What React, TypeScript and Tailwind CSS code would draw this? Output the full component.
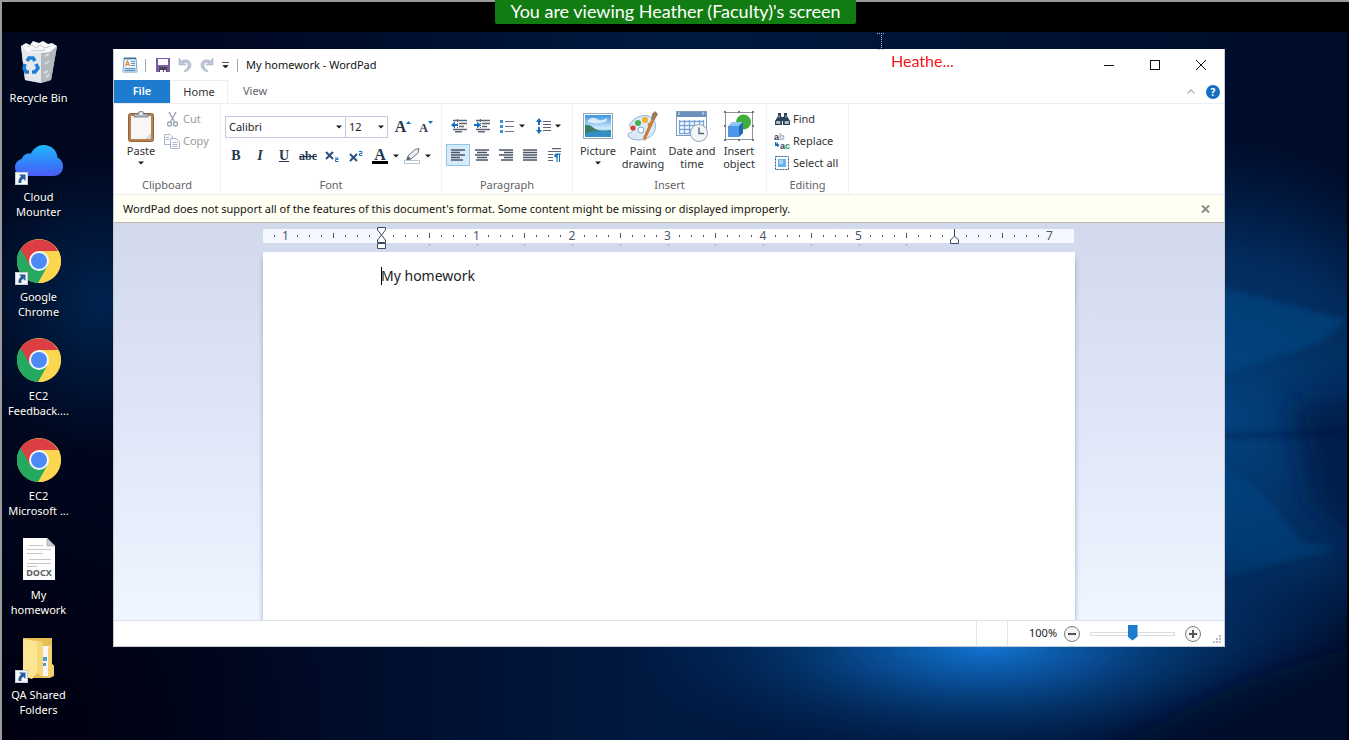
import { useState } from 'react'
import type { ReactNode } from 'react'
import clsx from 'clsx'

interface DesktopItem {
  name: string[]
  icon: ReactNode
  shortcut?: boolean
}

interface RibbonGroupProps {
  label: string
  className?: string
  children: ReactNode
}

interface IconButtonProps {
  label: string
  className?: string
  pressed?: boolean
  children: ReactNode
}

/* ---------- desktop icons ---------- */

function RecycleBinIcon() {
  return (
    <svg width="40" height="44" viewBox="0 0 40 44" aria-hidden="true">
      <path d="M2 6 L38 6 L32 40 L22 43 L6 40 Z" fill="#cfd4da" />
      <path d="M2 6 L22 11 L22 43 L6 40 Z" fill="#e4e8ec" />
      <path d="M22 11 L38 6 L32 40 L22 43 Z" fill="#b4b9c0" />
      <path d="M2 6 L7 3 L11 5 L14 1 L20 3 L24 1 L29 4 L33 3 L38 6 L31 12 L22 13 L9 12 Z" fill="#f7f8f9" />
      <path d="M8 7l5-2 4 3 4-3 5 3 5-2M12 10l6 1 8-1" fill="none" stroke="#c2c6cb" />
      <path d="M26 16l4-2M26 24l4-3M25 33l4-2M27 38l3-4" stroke="#d5d9dd" strokeWidth="2" />
      <g fill="none" stroke="#1b7fd4" strokeWidth="3.500">
        <path d="M8 21l2-3 4 0 2 3" />
        <path d="M6 24l-1 4 2 4h3" />
        <path d="M13 32h3l3-4-2-4" />
      </g>
    </svg>
  )
}

function CloudIcon() {
  return (
    <svg width="48" height="32" viewBox="0 0 48 32" aria-hidden="true">
      <defs>
        <linearGradient id="cloud" x1="0" y1="0" x2="0" y2="1">
          <stop offset="0" stopColor="#20b8fc" />
          <stop offset="0.500" stopColor="#3088fb" />
          <stop offset="1" stopColor="#4b5cf6" />
        </linearGradient>
      </defs>
      <path
        d="M10 31C4 31 0 27.500 0 22.500C0 18 3 14.500 7 14C7.500 10 11.500 8 16 8.500C19 3 23 0 28.500 0C36 0 42 5 42.500 12.500C46 14 48 17.500 48 21.500C48 27 44 31 38.500 31Z"
        fill="url(#cloud)"
      />
    </svg>
  )
}

function ChromeIcon() {
  return (
    <svg width="44" height="44" viewBox="0 0 44 44" aria-hidden="true">
      <circle cx="22" cy="22" r="22" fill="#fdd64f" />
      <path d="M22 22L13.300 27L2.900 11A22 22 0 0 1 41 12H22Z" fill="#db3f44" />
      <path d="M22 22L30.700 27L21 44A22 22 0 0 1 3.500 10L13.300 27Z" fill="#25a960" />
      <path d="M22 12H41.500A22 22 0 0 1 21.500 44L30.700 27Z" fill="#fdd64f" />
      <circle cx="22" cy="22" r="10" fill="#f4f8fc" />
      <circle cx="22" cy="22" r="8" fill="#4c8bf5" />
    </svg>
  )
}

function DocxIcon() {
  return (
    <svg width="32" height="42" viewBox="0 0 32 42" className="[text-shadow:none]" aria-hidden="true">
      <path d="M0 0H24L32 8V42H0Z" fill="#fdfdfd" />
      <path d="M24 0V8H32Z" fill="#c9ccd0" stroke="#8b9096" strokeWidth="0.500" />
      <path d="M6 7.500H20M4 11.500H28M4 15.500H19M6 21.500H28M4 25.500H28M4 28.500H14" stroke="#c5c7ca" />
      <text x="16" y="38" textAnchor="middle" fontSize="9" fontWeight="700" fontFamily="Noto Sans, sans-serif" fill="#5b5d60">
        DOCX
      </text>
    </svg>
  )
}

function FolderIcon() {
  return (
    <svg width="32" height="42" viewBox="0 0 32 42" aria-hidden="true">
      <path d="M0 0H29V26L31 28V38L27 40H8Z" fill="#e7bf55" />
      <path d="M19 8H26V38H19Z" fill="#f5f7fa" />
      <path d="M20 19h4v4h-4zM20 25h3v3h-3z" fill="#4aa0d0" />
      <path d="M25 10l4-4v20l2 2v9l-6 2z" fill="#f4d270" />
      <path d="M0 1L20 4V38L14 35L9 41L0 38Z" fill="#fce694" />
      <path d="M14 3L20 4V38L14 35Z" fill="#f6d879" />
    </svg>
  )
}

function ShortcutArrow() {
  return (
    <svg className="absolute bottom-0 left-0" width="13" height="13" viewBox="0 0 13 13" aria-hidden="true">
      <rect x="0.500" y="0.500" width="12" height="12" fill="#f6f8fa" stroke="#c4ccd4" />
      <path d="M4 2.500H10.500V9L8.300 6.800C6.500 8 6 9 6.500 11H3.500C3 8.500 4 6.500 6 4.500Z" fill="#2b5d9c" />
    </svg>
  )
}

const desktopItems: DesktopItem[] = [
  { name: ['Recycle Bin'], icon: <RecycleBinIcon /> },
  { name: ['Cloud', 'Mounter'], icon: <CloudIcon />, shortcut: true },
  { name: ['Google', 'Chrome'], icon: <ChromeIcon />, shortcut: true },
  { name: ['EC2', 'Feedback....'], icon: <ChromeIcon /> },
  { name: ['EC2', 'Microsoft ...'], icon: <ChromeIcon /> },
  { name: ['My', 'homework'], icon: <DocxIcon /> },
  { name: ['QA Shared', 'Folders'], icon: <FolderIcon />, shortcut: true },
]

function Wallpaper() {
  return (
    <svg
      className="absolute inset-0 h-full w-full"
      viewBox="0 0 1345 708"
      preserveAspectRatio="none"
      aria-hidden="true"
    >
      <defs>
        <linearGradient id="night" x1="0" y1="0" x2="1" y2="0">
          <stop offset="0" stopColor="#000820" />
          <stop offset="0.080" stopColor="#00061e" />
          <stop offset="0.250" stopColor="#000c2a" />
          <stop offset="0.500" stopColor="#001a42" />
          <stop offset="0.800" stopColor="#001030" />
          <stop offset="1" stopColor="#000c2a" />
        </linearGradient>
        <radialGradient id="glow">
          <stop offset="0" stopColor="#1377d6" />
          <stop offset="0.300" stopColor="#0a58a6" stopOpacity="0.850" />
          <stop offset="0.600" stopColor="#033a74" stopOpacity="0.600" />
          <stop offset="1" stopColor="#012454" stopOpacity="0" />
        </radialGradient>
        <radialGradient id="side">
          <stop offset="0" stopColor="#04427f" />
          <stop offset="0.600" stopColor="#022e60" stopOpacity="0.900" />
          <stop offset="1" stopColor="#012454" stopOpacity="0" />
        </radialGradient>
        <radialGradient id="left">
          <stop offset="0" stopColor="#00234e" />
          <stop offset="1" stopColor="#00234e" stopOpacity="0" />
        </radialGradient>
        <radialGradient id="corner">
          <stop offset="0" stopColor="#000010" />
          <stop offset="1" stopColor="#000010" stopOpacity="0" />
        </radialGradient>
        <filter id="edge" x="-30%" y="-30%" width="160%" height="160%">
          <feGaussianBlur stdDeviation="3" />
        </filter>
        <filter id="soft" x="-50%" y="-50%" width="200%" height="200%">
          <feGaussianBlur stdDeviation="14" />
        </filter>
      </defs>
      <rect width="1345" height="708" fill="url(#night)" />
      <ellipse cx="100" cy="270" rx="140" ry="150" fill="url(#left)" />
      <ellipse cx="0" cy="700" rx="340" ry="320" fill="url(#corner)" />
      <ellipse cx="1220" cy="390" rx="280" ry="280" fill="url(#side)" />
      <path d="M1290 370L1370 365V520L1310 470Z" fill="#001440" opacity="0.700" filter="url(#soft)" />
      <g filter="url(#edge)">
        <path d="M1200 250L1345 288L1320 310L1200 350Z" fill="#054a8c" opacity="0.500" />
        <path d="M1200 420L1260 460L1300 510L1335 516L1222 545H1200Z" fill="#054a8c" opacity="0.400" />
        <path d="M1222 402L1345 400V403L1222 405Z" fill="#000d30" opacity="0.500" />
      </g>
      <ellipse cx="985" cy="612" rx="370" ry="130" fill="url(#glow)" />
      <path d="M1400 600L1240 650L1080 730H1400Z" fill="#000e2c" opacity="0.700" filter="url(#soft)" />
    </svg>
  )
}

/* ---------- small window glyphs ---------- */

function DropArrow() {
  return (
    <svg width="6" height="4" viewBox="0 0 6 4" aria-hidden="true">
      <path d="M0 0.500H6L3 3.500Z" fill="#1c1c1c" />
    </svg>
  )
}

function AppIcon() {
  return (
    <svg width="16" height="16" viewBox="0 0 16 16" aria-hidden="true">
      <path d="M2 1H14L15 15H1Z" fill="#eaf3fb" stroke="#6d9fc6" />
      <path d="M1 11h14v4H1z" fill="#a9cfe9" />
      <path d="M2 1.500H14" stroke="#3b7198" strokeWidth="1.500" />
      <path d="M3.500 9l2-5 2 5M4.500 7.500h2" stroke="#e58a2b" fill="none" strokeWidth="1.200" />
      <path d="M9 4.500h4M9 6.500h4M9 8.500h4M3 11.500h10M3 13.500h10" stroke="#5b93bd" />
    </svg>
  )
}

function SaveIcon() {
  return (
    <svg width="14" height="14" viewBox="0 0 14 14" aria-hidden="true">
      <path d="M0 0H14V14H0Z" fill="#7a5fa8" />
      <path d="M2 1H12V7H2Z" fill="#fbfaff" />
      <path d="M3 9H11V14H3Z" fill="#4a4356" />
      <path d="M4 12H7V14H4ZM8 12H10V14H8Z" fill="#f4f2f8" />
    </svg>
  )
}

function UndoIcon({ flip }: { flip?: boolean }) {
  return (
    <svg width="14" height="14" viewBox="0 0 14 14" className={clsx(flip && '-scale-x-100')} aria-hidden="true">
      <path
        d="M1 0V7H8L5.500 5C8 3.500 10.500 5 10 8C9.700 10 8 11.500 6.500 12.500V14C10 13 13 10.500 13 7C13 2.500 8 0 3.500 3Z"
        fill="#bcc4d6"
        stroke="#a4afc6"
        strokeWidth="0.500"
      />
    </svg>
  )
}

function PasteIcon() {
  return (
    <svg width="26" height="31" viewBox="0 0 26 31" aria-hidden="true">
      <rect x="0.500" y="2.500" width="25" height="28" rx="2" fill="#b98150" stroke="#8f6238" />
      <path d="M3 5H23V28H3Z" fill="#f7f7f6" />
      <path d="M17 28L23 22V28Z" fill="#d8d8d8" />
      <path d="M6 3h4c0-4 6-4 6 0h4v3H6z" fill="#b7bcc1" stroke="#71777d" strokeWidth="0.800" />
      <circle cx="13" cy="2.800" r="1.200" fill="#fff" />
    </svg>
  )
}

function CutIcon() {
  return (
    <svg width="11" height="15" viewBox="0 0 11 15" fill="none" stroke="#9aa3b4" strokeWidth="1.400" aria-hidden="true">
      <path d="M2 0L7.500 10M9 0L3.500 10" />
      <circle cx="2.500" cy="12" r="2" />
      <circle cx="8.500" cy="12" r="2" />
    </svg>
  )
}

function CopyIcon() {
  return (
    <svg width="16" height="15" viewBox="0 0 16 15" fill="#fbfcfe" stroke="#aeb9cd" aria-hidden="true">
      <path d="M0.500 0.500H6L8.500 3V10.500H0.500Z" />
      <path d="M6.500 4.500H12L15.500 7.500V14.500H6.500Z" />
      <path d="M2 3.500h3M2 5.500h3M8.500 8.500h5M8.500 10.500h5M8.500 12.500h5" />
    </svg>
  )
}

function IndentIcon({ outdent }: { outdent?: boolean }) {
  return (
    <svg width="16" height="14" viewBox="0 0 16 14" aria-hidden="true">
      <path d="M2 1.500H16M8 4.500H16M8 7.500H13M2 10.500H16M4 12.800H11" stroke="#5c6575" strokeWidth="1.500" />
      <path d={outdent ? 'M0 6L4 2.500V5H7V7H4V9.500Z' : 'M7 6L3 2.500V5H0V7H3V9.500Z'} fill="#1670c0" />
      <path d="M6.500 0V14" stroke="#5c6575" strokeDasharray="1 1" />
    </svg>
  )
}

function BulletsIcon() {
  return (
    <svg width="14" height="13" viewBox="0 0 14 13" aria-hidden="true">
      <path d="M5 1.500H14M5 6.500H14M5 11.500H14" stroke="#6b7484" strokeWidth="1.200" />
      <path d="M0 0H3V3H0ZM0 5H3V8H0ZM0 10H3V13H0Z" fill="#3d8fd6" />
    </svg>
  )
}

function SpacingIcon() {
  return (
    <svg width="15" height="16" viewBox="0 0 15 16" aria-hidden="true">
      <path d="M3 0L6 4H4V12H6L3 16L0 12H2V4H0Z" fill="#1670c0" />
      <path d="M1 7H5V9H1Z" fill="#fff" />
      <path d="M7 3.500H15M7 6.500H15M7 9.500H15M7 12.500H15" stroke="#5c6575" strokeWidth="1.200" />
    </svg>
  )
}

const alignPaths = {
  left: 'M0 1H14M0 3.500H9M0 6H14M0 8.500H9M0 11H12',
  center: 'M0 1H14M2 3.500H12M0 6H14M2 8.500H12M1 11H13',
  right: 'M0 1H14M5 3.500H14M0 6H14M5 8.500H14M2 11H14',
  justify: 'M0 1H14M0 3.500H14M0 6H14M0 8.500H14M0 11H14',
}

function AlignIcon({ align }: { align: keyof typeof alignPaths }) {
  return (
    <svg width="14" height="12" viewBox="0 0 14 12" aria-hidden="true">
      <path d={alignPaths[align]} stroke="#4c5567" strokeWidth="1.400" />
    </svg>
  )
}

function ParagraphIcon() {
  return (
    <svg width="13" height="14" viewBox="0 0 13 14" aria-hidden="true">
      <path d="M4 0.700H13M0 3.500H13M0 6.500H5M0 9.500H5M0 12.500H5" stroke="#5c6575" strokeWidth="1.200" />
      <path d="M8.500 14V9.500C5.500 9.500 5.500 5.500 8.500 5.500H12.500V7H12V14H11V7H9.700V14Z" fill="#1670c0" />
    </svg>
  )
}

function HighlightIcon() {
  return (
    <svg width="17" height="16" viewBox="0 0 17 16" aria-hidden="true">
      <path d="M4 8L11 1.500L15 0.500L14 5L7 11L3 12Z" fill="#eef1f5" stroke="#6b7484" />
      <path d="M4 8L7 11L2 12.500Z" fill="#5c6575" />
      <rect x="0.500" y="12.500" width="15" height="3" fill="#fff" stroke="#b9c4d4" />
    </svg>
  )
}

function PictureIcon() {
  return (
    <svg width="30" height="26" viewBox="0 0 30 26" aria-hidden="true">
      <defs>
        <linearGradient id="sky" x1="0" y1="0" x2="0" y2="1">
          <stop offset="0" stopColor="#3d93e0" />
          <stop offset="0.600" stopColor="#cfeafa" />
          <stop offset="1" stopColor="#3b9ad0" />
        </linearGradient>
      </defs>
      <rect x="0.500" y="0.500" width="29" height="25" fill="#fff" stroke="#9aa7b6" />
      <path d="M2 2H28V24H2Z" fill="url(#sky)" />
      <path d="M5 7q5-4 9-1t10-1v3q-8 4-19 1z" fill="#fff" opacity="0.700" />
      <path d="M2 12Q6 11 11 15T28 17V19L12 19L2 22Z" fill="#3a7d63" />
      <path d="M2 21Q10 17 28 18V24H2Z" fill="#2f8fc6" />
    </svg>
  )
}

function PaintIcon() {
  return (
    <svg width="32" height="31" viewBox="0 0 32 31" aria-hidden="true">
      <path
        d="M3 13C8 5 19 2 25 7C31 12 29 24 21 27C14 30 2 30 1 24C0.500 21 7 22 6 18C5 16 1 17 3 13Z"
        fill="#dce9f7"
        stroke="#8db1d8"
      />
      <circle cx="6" cy="17" r="2.600" fill="#d83f35" />
      <circle cx="11" cy="12" r="3" fill="#46b04a" />
      <circle cx="18" cy="9" r="3" fill="#f0b429" />
      <circle cx="23" cy="14" r="2.400" fill="#e9803b" />
      <circle cx="14" cy="19" r="3" fill="#fff" stroke="#7aa6d6" />
      <path d="M18 30L16 27L24 9L27 10Z" fill="#c77c3c" />
      <path d="M24 9L25 3L28 0L31 3L27 10Z" fill="#9b7a55" />
    </svg>
  )
}

function DateIcon() {
  return (
    <svg width="32" height="31" viewBox="0 0 32 31" aria-hidden="true">
      <rect x="0.500" y="0.500" width="30" height="24" fill="#fff" stroke="#7e9cc0" />
      <path d="M1 1H30V6H1Z" fill="#6d8fbd" />
      <path d="M3 1V4M27 1V4" stroke="#dfe8f4" />
      <path
        d="M3 10.500H27M3 14.500H27M3 18.500H27M3 22.500H18M3.500 9V23M8.500 9V23M13.500 9V23M18.500 9V20M23.500 9V18M27.500 9V18"
        stroke="#79a5da"
        strokeWidth="1.300"
      />
      <circle cx="23" cy="22" r="8.500" fill="#f2f6fa" stroke="#98a4b2" />
      <path d="M23 16.500V22.500H28" stroke="#515f70" strokeWidth="1.300" fill="none" />
    </svg>
  )
}

function ObjectIcon() {
  return (
    <svg width="30" height="30" viewBox="0 0 30 30" aria-hidden="true">
      <rect x="1.500" y="1.500" width="27" height="27" fill="#fff" stroke="#8d939a" />
      <path
        d="M0 0H2V2H0ZM14 0H16V2H14ZM28 0H30V2H28ZM0 14H2V16H0ZM28 14H30V16H28ZM0 28H2V30H0ZM14 28H16V30H14ZM28 28H30V30H28Z"
        fill="#6f757c"
      />
      <circle cx="19.500" cy="11" r="7.500" fill="#3fae3c" />
      <path d="M4 15L8 11H19L15 15Z" fill="#8fc4f6" />
      <path d="M4 15H15V26H4Z" fill="#4c97e8" />
      <path d="M15 15L19 11V22L15 26Z" fill="#2467b8" />
    </svg>
  )
}

function FindIcon() {
  return (
    <svg width="15" height="13" viewBox="0 0 15 13" aria-hidden="true">
      <path d="M3 0H6V3L7 5V12H0V8L3 3ZM9 0H12V3L15 8V12H8V5L9 3Z" fill="#2d4159" />
      <path d="M6 4H9V8H6Z" fill="#2d4159" />
      <path d="M1.500 8.500H5V10.500H1.500ZM10 8.500H13.500V10.500H10ZM4 2v3M11 2v3" fill="#b8c9da" stroke="#b8c9da" strokeWidth="0.700" />
    </svg>
  )
}

function ReplaceIcon() {
  return (
    <svg
      width="16"
      height="20"
      viewBox="0 0 16 20"
      fontFamily="Liberation Sans, sans-serif"
      fontSize="9"
      fontWeight="700"
      aria-hidden="true"
    >
      <text x="0" y="9">
        <tspan fill="#2d4159">a</tspan>
        <tspan fill="#a3a9b1">b</tspan>
      </text>
      <text x="6" y="18">
        <tspan fill="#2d4159">a</tspan>
        <tspan fill="#2a9446">c</tspan>
      </text>
      <path d="M1 11V15H3V16.500L5.500 14L3 11.500V13H2.500V11Z" fill="#1670c0" />
    </svg>
  )
}

function SelectAllIcon() {
  return (
    <svg width="14" height="14" viewBox="0 0 14 14" aria-hidden="true">
      <rect x="0.500" y="0.500" width="13" height="13" fill="none" stroke="#2d5580" strokeDasharray="2 1" />
      <path d="M3 3H11V11H3Z" fill="#66b3ee" />
      <path d="M4 4H8V8H4Z" fill="#a9d6f8" />
    </svg>
  )
}

/* ---------- ribbon parts ---------- */

function RibbonGroup({ label, className, children }: RibbonGroupProps) {
  return (
    <section className={clsx('flex flex-col border-r border-[#f0f1f4] pt-1', className)} aria-label={label}>
      <div className="h-[69px]">{children}</div>
      <div className="text-center leading-[16px] text-[#5f6368]">{label}</div>
    </section>
  )
}

function IconButton({ label, className, pressed, children }: IconButtonProps) {
  return (
    <button
      type="button"
      aria-label={label}
      aria-pressed={pressed}
      className={clsx(
        'flex h-[22px] items-center justify-center font-["Liberation_Serif",serif] text-[14px] leading-none text-[#26364f]',
        pressed ? 'border border-[#8fc3ea] bg-[#d5ebfa]' : 'hover:bg-[#e8f3fc]',
        className,
      )}
    >
      {children}
    </button>
  )
}

function ArrowButton({ label }: { label: string }) {
  return (
    <button type="button" aria-label={label} className="flex h-[22px] w-2 items-center justify-center">
      <DropArrow />
    </button>
  )
}

function BigButton({ lines, icon, arrow, className }: { lines: string[]; icon: ReactNode; arrow?: boolean; className?: string }) {
  return (
    <button type="button" className={clsx('flex flex-col items-center text-[#333]', className)}>
      <span className="flex h-9 items-center justify-center">{icon}</span>
      {lines.map((line) => (
        <span key={line} className="leading-[13px] whitespace-nowrap first-of-type:pt-px">
          {line}
        </span>
      ))}
      {arrow && (
        <span className="flex h-[11px] items-center">
          <DropArrow />
        </span>
      )}
    </button>
  )
}

function SmallButton({ label, icon, disabled }: { label: string; icon: ReactNode; disabled?: boolean }) {
  return (
    <button
      type="button"
      disabled={disabled}
      className={clsx('flex h-[22px] items-center gap-[3px]', disabled ? 'text-[#9a9a9a]' : 'text-[#333]')}
    >
      <span className="flex w-4 justify-center">{icon}</span>
      {label}
    </button>
  )
}

function Ribbon() {
  const [align, setAlign] = useState<keyof typeof alignPaths>('left')

  return (
    <div className="flex h-[92px] shrink-0 border-y border-[#eceef2] bg-white">
      <RibbonGroup label="Clipboard" className="w-[107px]">
        <div className="flex gap-1">
          <BigButton lines={['Paste']} icon={<PasteIcon />} arrow className="ml-2 w-[38px]" />
          <div>
            <SmallButton label="Cut" icon={<CutIcon />} disabled />
            <SmallButton label="Copy" icon={<CopyIcon />} disabled />
          </div>
        </div>
      </RibbonGroup>

      <RibbonGroup label="Font" className="w-[221px]">
        <div className="flex items-center pt-2 pl-1">
          <label className="relative flex items-center">
            <span className="sr-only">Font family</span>
            <select className="h-[22px] w-[121px] appearance-none border border-[#c3cbe0] bg-white px-[3px] leading-[20px] text-[#222]">
              <option>Calibri</option>
            </select>
            <span className="pointer-events-none absolute right-1">
              <DropArrow />
            </span>
          </label>
          <label className="relative flex items-center">
            <span className="sr-only">Font size</span>
            <select className="h-[22px] w-[42px] appearance-none border border-l-0 border-[#c3cbe0] bg-white px-[3px] leading-[20px] text-[#222]">
              <option>12</option>
            </select>
            <span className="pointer-events-none absolute right-1">
              <DropArrow />
            </span>
          </label>
          <IconButton label="Grow font" className="ml-[3px] w-6 font-bold">
            <span className="text-[16px]">A</span>
            <svg width="5" height="12" viewBox="0 0 5 12" aria-hidden="true">
              <path d="M2.500 0L5 3H0Z" fill="#1670c0" />
            </svg>
          </IconButton>
          <IconButton label="Shrink font" className="w-[22px] font-bold">
            <span className="pt-[2px] text-[12px]">A</span>
            <svg width="5" height="12" viewBox="0 0 5 12" aria-hidden="true">
              <path d="M2.500 3L5 0H0Z" fill="#1670c0" />
            </svg>
          </IconButton>
        </div>
        <div className="flex pt-[7px] pl-[3px]">
          <IconButton label="Bold" className="w-6 font-bold">B</IconButton>
          <IconButton label="Italic" className="w-6 font-bold italic">I</IconButton>
          <IconButton label="Underline" className="w-6 font-bold underline">U</IconButton>
          <IconButton label="Strikethrough" className="w-6 font-bold">
            <span className="text-[12px] line-through">abc</span>
          </IconButton>
          <IconButton label="Subscript" className="w-6 font-bold">
            <svg width="14" height="11" viewBox="0 0 14 11" aria-hidden="true">
              <path d="M1 1L8 8M8 1L1 8" stroke="#2b4f80" strokeWidth="2" />
              <path d="M10 7H13V8.500H10.500V10.500H13.500" stroke="#1670c0" fill="none" />
            </svg>
          </IconButton>
          <IconButton label="Superscript" className="w-6 font-bold">
            <svg width="14" height="11" viewBox="0 0 14 11" aria-hidden="true">
              <path d="M1 3L8 10M8 3L1 10" stroke="#2b4f80" strokeWidth="2" />
              <path d="M10 0.500H13V2.500H10.500V4.500H13.500" stroke="#1670c0" fill="none" />
            </svg>
          </IconButton>
          <IconButton label="Text color" className="w-6 font-bold">
            <span className="flex h-4 w-4 items-center justify-center border-b-3 border-black text-[16px]">A</span>
          </IconButton>
          <ArrowButton label="More text colors" />
          <IconButton label="Text highlight color" className="w-6">
            <HighlightIcon />
          </IconButton>
          <ArrowButton label="More highlight colors" />
        </div>
      </RibbonGroup>

      <RibbonGroup label="Paragraph" className="w-[131px]">
        <div className="flex pt-[7px] pl-[5px]">
          <IconButton label="Decrease indent" className="w-[23px]">
            <IndentIcon outdent />
          </IconButton>
          <IconButton label="Increase indent" className="w-[23px]">
            <IndentIcon />
          </IconButton>
          <IconButton label="Start a list" className="ml-[2px] w-[23px]">
            <BulletsIcon />
          </IconButton>
          <ArrowButton label="List styles" />
          <IconButton label="Line spacing" className="ml-[6px] w-[22px]">
            <SpacingIcon />
          </IconButton>
          <ArrowButton label="Line spacing options" />
        </div>
        <div className="flex pt-[7px] pl-1">
          {(Object.keys(alignPaths) as (keyof typeof alignPaths)[]).map((key) => (
            <button
              key={key}
              type="button"
              aria-label={`Align ${key}`}
              aria-pressed={align === key}
              onClick={() => setAlign(key)}
              className={clsx(
                'flex h-[22px] w-6 items-center justify-center border',
                align === key ? 'border-[#8fc3ea] bg-[#d5ebfa]' : 'border-transparent',
              )}
            >
              <AlignIcon align={key} />
            </button>
          ))}
          <IconButton label="Paragraph" className="w-6">
            <ParagraphIcon />
          </IconButton>
        </div>
      </RibbonGroup>

      <RibbonGroup label="Insert" className="w-[194px]">
        <div className="flex items-start pl-[3px]">
          <BigButton lines={['Picture']} icon={<PictureIcon />} arrow className="w-[44px]" />
          <BigButton lines={['Paint', 'drawing']} icon={<PaintIcon />} className="w-[46px]" />
          <BigButton lines={['Date and', 'time']} icon={<DateIcon />} className="w-[52px]" />
          <BigButton lines={['Insert', 'object']} icon={<ObjectIcon />} className="w-[42px]" />
        </div>
      </RibbonGroup>

      <RibbonGroup label="Editing" className="w-[82px]">
        <div className="pl-[7px]">
          <SmallButton label="Find" icon={<FindIcon />} />
          <SmallButton label="Replace" icon={<ReplaceIcon />} />
          <SmallButton label="Select all" icon={<SelectAllIcon />} />
        </div>
      </RibbonGroup>
    </div>
  )
}

/* ---------- ruler ---------- */

const INCH = 95.5
const ORIGIN = 118

function Ruler() {
  const eighths = Array.from({ length: 66 }, (_, i) => i - 9)

  return (
    <svg className="mx-auto block" width="812" height="29" viewBox="0 0 812 29" aria-label="Ruler">
      <rect y="6" width="811" height="14" fill="#f4f8fe" />
      <rect x={ORIGIN} y="6" width={INCH * 6} height="14" fill="#fff" />
      {eighths.map((n) => {
        const x = ORIGIN + (n * INCH) / 8
        if (n === 0 || n === 48) return null
        if (n % 8 === 0) {
          return (
            <text key={n} x={x} y="17" textAnchor="middle" fontSize="12" fill="#4e566b">
              {Math.abs(n / 8)}
            </text>
          )
        }
        const half = n % 4 === 0
        return <rect key={n} x={Math.round(x)} y={half ? 10 : 12} width="1" height={half ? 5 : 2} fill="#4e566b" />
      })}
      {Array.from({ length: 11 }, (_, i) => (
        <rect key={i} x={Math.round(ORIGIN + ((i + 1) * INCH) / 2)} y="21" width="1" height="2" fill="#a9b0c2" />
      ))}
      <g fill="#fff" stroke="#3d4966">
        <path d="M114.500 4.500H122.500V7L118.500 12L114.500 7Z" />
        <path d="M118.500 12L122.500 17V19.500H114.500V17Z" />
        <path d="M114.500 20.500H122.500V25.500H114.500Z" />
        <path d="M691.500 6V13L695.500 17V20.500H687.500V17L691.500 13" />
      </g>
    </svg>
  )
}

/* ---------- window ---------- */

function TitleBar() {
  return (
    <header className="flex h-[30px] shrink-0 items-center bg-white">
      <div className="flex flex-1 items-center pl-2">
        <AppIcon />
        <span className="mr-[10px] ml-[7px] h-[13px] w-px bg-[#a8a8a8]" />
        <button type="button" aria-label="Save">
          <SaveIcon />
        </button>
        <button type="button" aria-label="Undo" className="ml-2">
          <UndoIcon />
        </button>
        <button type="button" aria-label="Redo" className="ml-2">
          <UndoIcon flip />
        </button>
        <button type="button" aria-label="Customize Quick Access Toolbar" className="ml-2">
          <svg width="7" height="7" viewBox="0 0 7 7" aria-hidden="true">
            <path d="M0 0.500H7M1 3.500L3.500 6L6 3.500Z" fill="#222" stroke="#222" strokeWidth="0.800" />
          </svg>
        </button>
        <span className="mx-2 h-[13px] w-px bg-[#a8a8a8]" />
        <h1 className="text-[#111]">My homework - WordPad</h1>
      </div>
      <button type="button" aria-label="Minimize" className="flex h-full w-[46px] items-center justify-center">
        <svg width="10" height="10" stroke="#111">
          <path d="M0 5.500H10" />
        </svg>
      </button>
      <button type="button" aria-label="Maximize" className="flex h-full w-[46px] items-center justify-center">
        <svg width="10" height="10" stroke="#111" fill="none">
          <rect x="0.500" y="0.500" width="9" height="9" />
        </svg>
      </button>
      <button type="button" aria-label="Close" className="flex h-full w-[46px] items-center justify-center">
        <svg width="10" height="10" stroke="#111">
          <path d="M0 0L10 10M10 0L0 10" />
        </svg>
      </button>
    </header>
  )
}

function RibbonTabs() {
  return (
    <nav className="flex h-[23px] shrink-0 bg-white">
      <button type="button" className="w-14 bg-[#1d7cd0] font-semibold text-white">
        File
      </button>
      <button type="button" className="w-[58px] border-x border-t border-[#eceef2] text-[#333]">
        Home
      </button>
      <button type="button" className="w-[54px] text-[#5f6368]">
        View
      </button>
      <div className="flex flex-1 items-center justify-end gap-[11px] pr-1">
        <button type="button" aria-label="Minimize the Ribbon">
          <svg width="8" height="5" viewBox="0 0 8 5" fill="none" stroke="#b4b4b4" strokeWidth="1.300">
            <path d="M0.500 4.500L4 1L7.500 4.500" />
          </svg>
        </button>
        <button
          type="button"
          aria-label="WordPad Help"
          className="h-[14px] w-[14px] rounded-full bg-[#1670c0] text-[10px] leading-[14px] font-bold text-white"
        >
          ?
        </button>
      </div>
    </nav>
  )
}

function StatusBar() {
  const [zoom, setZoom] = useState(100)

  return (
    <footer className="flex h-[26px] shrink-0 items-center justify-end border-t border-[#dfe3ec] bg-white text-[#222]">
      <span className="h-full w-8 border-x border-[#e3e5ea]" />
      <span className="ml-[21px] w-[35px]">{zoom}%</span>
      <button
        type="button"
        aria-label="Zoom out"
        onClick={() => setZoom(Math.max(10, zoom - 10))}
        className="flex h-4 w-4 items-center justify-center rounded-full border border-[#7c7c7c] bg-[#f7f7f7]"
      >
        <span className="h-[2px] w-2 bg-[#555]" />
      </button>
      <input
        type="range"
        aria-label="Zoom"
        min={0}
        max={200}
        value={zoom}
        onChange={(event) => setZoom(Number(event.target.value))}
        className="mx-[10px] h-4 w-[85px] appearance-none bg-transparent [&::-webkit-slider-runnable-track]:h-[4px] [&::-webkit-slider-runnable-track]:border [&::-webkit-slider-runnable-track]:border-[#dcdcdc] [&::-webkit-slider-runnable-track]:bg-white [&::-webkit-slider-thumb]:-mt-[8px] [&::-webkit-slider-thumb]:h-4 [&::-webkit-slider-thumb]:w-[10px] [&::-webkit-slider-thumb]:appearance-none [&::-webkit-slider-thumb]:bg-[#1d7cd0] [&::-webkit-slider-thumb]:[clip-path:polygon(0_0,100%_0,100%_75%,50%_100%,0_75%)]"
      />
      <button
        type="button"
        aria-label="Zoom in"
        onClick={() => setZoom(Math.min(200, zoom + 10))}
        className="flex h-4 w-4 items-center justify-center rounded-full border border-[#7c7c7c] bg-[#f7f7f7]"
      >
        <svg width="8" height="8" stroke="#555" strokeWidth="2">
          <path d="M0 4H8M4 0V8" />
        </svg>
      </button>
      <svg className="mr-[2px] mb-[2px] ml-3 self-end" width="9" height="9" viewBox="0 0 9 9" fill="#b9bcc4" aria-hidden="true">
        <path d="M6 0H8V2H6ZM3 3H5V5H3ZM6 3H8V5H6ZM0 6H2V8H0ZM3 6H5V8H3ZM6 6H8V8H6Z" />
      </svg>
    </footer>
  )
}

function WordPadWindow() {
  const [showNotice, setShowNotice] = useState(true)

  return (
    <main className="mt-[17px] mr-[122px] mb-[93px] flex min-w-0 flex-1 flex-col overflow-hidden border-x border-b border-[#c6cbd6] bg-white">
      <div className="h-px shrink-0" />
      <TitleBar />
      <RibbonTabs />
      <Ribbon />
      {showNotice && (
        <div className="flex h-[28px] shrink-0 items-center justify-between border-b border-[#bdb8ab] bg-[#fffff3] pr-[14px] pl-[9px] text-[#111]">
          <p className="pt-[2px] whitespace-nowrap">
            WordPad does not support all of the features of this document's format. Some content might be missing or
            displayed improperly.
          </p>
          <button type="button" aria-label="Close notice" onClick={() => setShowNotice(false)}>
            <svg width="9" height="8" viewBox="0 0 9 8" stroke="#8b8b8b" strokeWidth="2">
              <path d="M1 0.500L8 7.500M8 0.500L1 7.500" />
            </svg>
          </button>
        </div>
      )}
      <div className="flex flex-1 flex-col overflow-hidden bg-linear-to-b from-[#d3d9ec] via-[#e0e6f8] to-[#eff6ff]">
        <Ruler />
        <div className="relative mx-auto w-[812px] flex-1 bg-white shadow-[0_6px_5px_0px_#9aa7c8]">
          <textarea
            aria-label="Document"
            defaultValue="My homework"
            className="block h-full w-full resize-none pt-[14px] pr-[118px] pl-[118px] text-[14px] leading-[20px] text-[#222] outline-none"
          />
          <span className="absolute top-[15px] left-[118px] h-[18px] w-px bg-black" />
        </div>
      </div>
      <StatusBar />
    </main>
  )
}

export default function App() {
  return (
    <div className='flex min-h-screen flex-col border-t-2 border-l-2 border-[#9b9b9b] bg-black font-["Noto_Sans","Open_Sans",sans-serif] text-[11px]'>
      <div className="flex h-[30px] shrink-0 justify-center">
        <div className='-mt-[2px] h-6 rounded-b-[2px] bg-[#117c11] px-[15px] font-["Lato",sans-serif] text-[18px] leading-[22px] text-white'>
          You are viewing Heather (Faculty)'s screen
        </div>
      </div>

      <div className="relative mr-[2px] flex flex-1 overflow-hidden">
        <Wallpaper />
        <ul className="relative grid w-[73px] shrink-0 auto-rows-fr pb-3">
          {desktopItems.map((item) => (
            <li key={item.name.join(' ')}>
              <a href="#open" className="flex flex-col items-center pt-[6px] text-white [text-shadow:1px_1px_2px_#000]">
                <span className="relative mb-1 flex h-12 w-12 items-center justify-center">
                  {item.icon}
                  {item.shortcut && <ShortcutArrow />}
                </span>
                {item.name.map((line) => (
                  <span key={line} className="leading-[15px] whitespace-nowrap">
                    {line}
                  </span>
                ))}
              </a>
            </li>
          ))}
        </ul>
        <div className="relative flex min-w-0 flex-1 pl-[38px]">
          <WordPadWindow />
        </div>

        {/* remote pointer with its owner's name */}
        <div className='absolute top-[1px] left-[875px] flex gap-[6px] font-["Lato",sans-serif] text-[16px] leading-[20px] text-[#f5141c]'>
          <svg width="8" height="17" viewBox="0 0 8 17" fill="none" stroke="#b9bdc6" strokeDasharray="1 1" aria-hidden="true">
            <path d="M0 0.500H8M0 16.500H8M4.500 0V17" />
          </svg>
          <span className="pt-[18px]">Heathe...</span>
        </div>
      </div>
    </div>
  )
}
